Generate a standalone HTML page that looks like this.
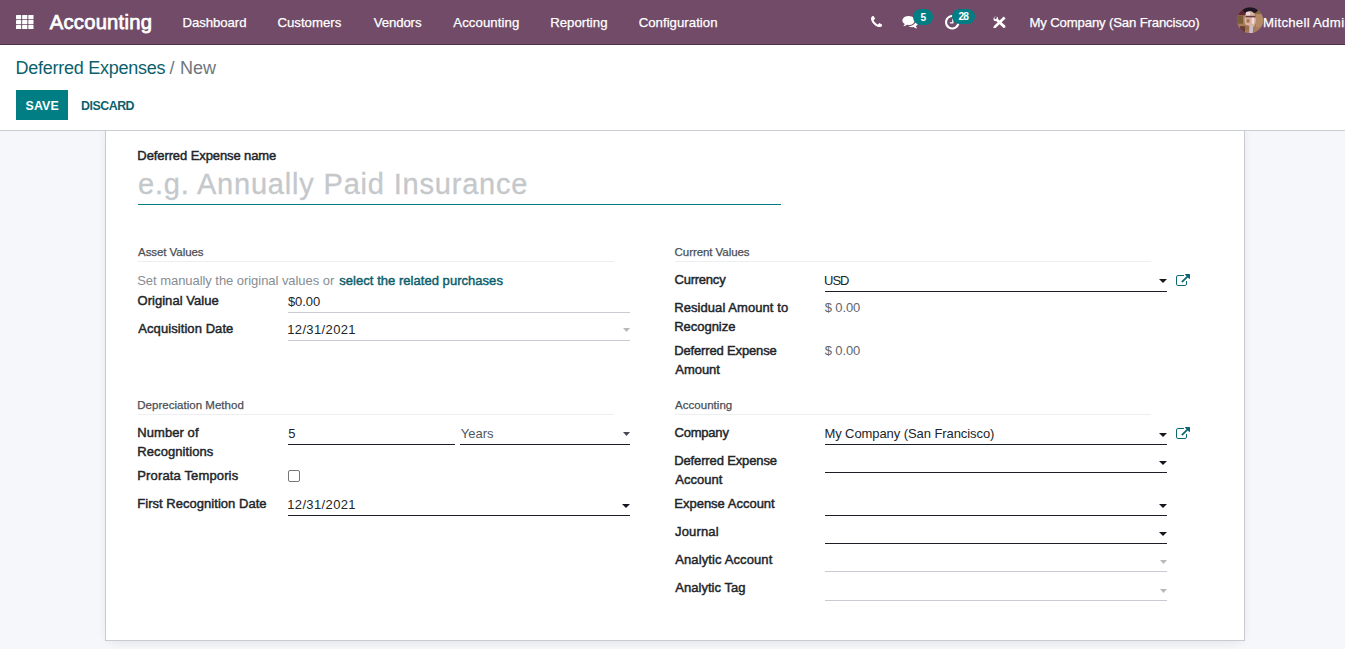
<!DOCTYPE html>
<html lang="en">
<head>
<meta charset="utf-8">
<title>Odoo - Deferred Expenses / New</title>
<style>
*{box-sizing:border-box;margin:0;padding:0}
html,body{width:1345px;height:649px;overflow:hidden}
body{font-family:"Liberation Sans",sans-serif;font-size:13px;color:#212529;background:#f6f7fa;position:relative}
.t{position:absolute;white-space:nowrap;line-height:1}
.a{position:absolute}
#nav{left:0;top:0;width:1345px;height:45px;background:#714b67;border-bottom:1px solid #4f3448}
#cp{left:0;top:45px;width:1345px;height:86px;background:#fff;border-bottom:1px solid #c9ccd2}
#save{left:16px;top:90px;width:52px;height:30px;background:#017e84}
#sheet{left:105px;top:120px;width:1140px;height:521px;background:#fff;border:1px solid #c9cad3;box-shadow:0 3px 12px -5px rgba(40,40,70,.16)}
.badge{background:#017e84;border-radius:8px}
.hr{position:absolute;height:1px;background:#eceef0}
.ul{position:absolute;height:1px;background:#1b1d29}
.ul.l{background:#c9cad3}
.car{position:absolute;width:0;height:0;border-left:4px solid transparent;border-right:4px solid transparent;border-top:4px solid #16161e}
.car.l{border:0;width:7px;height:4px;margin-left:1px;background:#b5b8bd;clip-path:polygon(0 0,100% 0,50% 100%)}
.car.g{border:0;width:7px;height:4px;margin-left:1px;background:#4b4856;clip-path:polygon(0 0,100% 0,50% 100%)}
#chk{left:288px;top:470px;width:12px;height:12px;border:1px solid #767676;border-radius:2px;background:#fff}
</style>
</head>
<body>
<div class="a" id="nav"></div>
<svg class="a" style="left:15.6px;top:14.8px" width="18" height="14.5" viewBox="0 0 18 14.5"><g fill="#fff"><rect x="0" y="0" width="5.2" height="4.2" rx="0.4"/><rect x="6.15" y="0" width="5.2" height="4.2" rx="0.4"/><rect x="12.3" y="0" width="5.2" height="4.2" rx="0.4"/><rect x="0" y="5.0" width="5.2" height="4.2" rx="0.4"/><rect x="6.15" y="5.0" width="5.2" height="4.2" rx="0.4"/><rect x="12.3" y="5.0" width="5.2" height="4.2" rx="0.4"/><rect x="0" y="10.0" width="5.2" height="4.2" rx="0.4"/><rect x="6.15" y="10.0" width="5.2" height="4.2" rx="0.4"/><rect x="12.3" y="10.0" width="5.2" height="4.2" rx="0.4"/></g></svg>
<!-- phone -->
<svg class="a" style="left:871px;top:16.3px" width="11.2" height="11.2" viewBox="0 0 1408 1408"><path fill="#fff" d="M1408 1112q0 27-10 70.500t-21 68.500q-21 50-122 106-94 51-186 51-27 0-53-3.500t-57.500-12.500-47-14.500-55.500-20.500-49-18q-98-35-175-83-127-79-264-216t-216-264q-48-77-83-175-3-9-18-49t-20.500-55.500-14.500-47-12.500-57.500-3.500-53q0-92 51-186 56-101 106-122 25-11 68.500-21t70.500-10q14 0 21 3 18 6 53 76 11 19 30 54t35 63.500 31 53.500q3 4 17.500 25t21.500 35.500 7 28.500q0 20-28.500 50t-62 55-62 53-28.500 46q0 9 5 22.500t8.500 20.500 14 24 11.500 19q76 137 174 235t235 174q2 1 19 11.500t24 14 20.500 8.500 22.500 5q18 0 46-28.500t53-62 55-62 50-28.500q14 0 28.500 7t35.500 21.500 25 17.500q25 15 53.500 31t63.500 35 54 30q70 35 76 53 3 7 3 21z"/></svg>
<!-- comments -->
<svg class="a" style="left:902px;top:16px" width="16.5" height="13.5" viewBox="0 0 1792 1536"><path fill="#fff" d="M1408 512q0 139-94 257t-256.500 186.500-353.500 68.500q-86 0-176-16-124 88-278 128-36 9-86 16h-3q-11 0-20.500-8t-11.500-21q-1-3-1-6.500t.500-6.500 2-6l2.500-5t3.500-5.500 4-5 4.500-5 4-4.500q5-6 23-25t26-29.500 22.500-29 25-38.500 20.500-44q-124-72-195-177t-71-224q0-139 94-257t256.500-186.500 353.500-68.500 353.500 68.500 256.500 186.500 94 257zM1792 768q0 120-71 224.500t-195 176.500q10 24 20.500 44t25 38.500 22.500 29 26 29.500 23 25q1 1 4 4.500t4.500 5 4 5 3.500 5.500l2.500 5t2 6 .5 6.500-1 6.500q-3 14-13 22t-22 7q-50-7-86-16-154-40-278-128-90 16-176 16-271 0-472-132 58 4 88 4 161 0 309-45t264-129q125-92 192-212t67-254q0-77-23-152 129 71 204 178t75 230z"/></svg>
<div class="a badge" style="left:913px;top:9px;width:20px;height:16px"></div>
<!-- clock -->
<svg class="a" style="left:945px;top:15px" width="14.5" height="14.5" viewBox="0 0 1536 1536"><path fill="#fff" d="M896 416v448q0 14-9 23t-23 9h-320q-14 0-23-9t-9-23v-64q0-14 9-23t23-9h224v-352q0-14 9-23t23-9h64q14 0 23 9t9 23zM1312 768q0-148-73-273t-198-198-273-73-273 73-198 198-73 273 73 273 198 198 273 73 273-73 198-198 73-273zM1536 768q0 209-103 385.500t-279.500 279.500-385.500 103-385.500-103-279.500-279.500-103-385.500 103-385.500 279.500-279.500 385.500-103 385.500 103 279.500 279.500 103 385.500z"/></svg>
<div class="a badge" style="left:952px;top:9px;width:23px;height:15px"></div>
<!-- tools -->
<svg class="a" style="left:992.5px;top:15.5px" width="13" height="13" viewBox="0 0 13 13"><path d="M0.3 12.1 L0.9 10 L10.7 0.5 L12.6 2.4 L2.6 11.9 Z" fill="#fff"/><path d="M3.2 4.9 L5 3 L12.4 9.8 L12.3 11.6 L10.5 12 Z" fill="#fff"/><circle cx="2.8" cy="2.9" r="2.35" fill="#fff"/><circle cx="2.5" cy="2.1" r="1.05" fill="#714b67"/><path d="M1.3 1.6 L3.2 0 L4 1.2 L2.6 2.4 Z" fill="#714b67"/></svg>
<!-- avatar -->
<svg class="a" style="left:1236.8px;top:6.8px" width="26" height="26.4" viewBox="0 0 26 26"><defs><clipPath id="av"><circle cx="13" cy="13" r="13"/></clipPath><filter id="bl" x="-10%" y="-10%" width="120%" height="120%"><feGaussianBlur stdDeviation="0.7"/></filter></defs><g clip-path="url(#av)"><rect width="26" height="26" fill="#a67c5a"/><g filter="url(#bl)"><rect x="-1" y="-1" width="14" height="9" fill="#5c2730"/><rect x="18" y="-1" width="9" height="8" fill="#8a6a45"/><rect x="-1" y="8.5" width="7" height="8" fill="#7a5c38"/><rect x="19" y="7" width="8" height="13" fill="#b58a66"/><ellipse cx="13.5" cy="2.8" rx="7.5" ry="3.4" fill="#1f1424"/><ellipse cx="13.2" cy="12.5" rx="5.8" ry="8.6" fill="#d9b3a3"/><ellipse cx="11" cy="6.5" rx="2.4" ry="2.2" fill="#ead6dc"/><rect x="8.5" y="8.6" width="10" height="1.6" fill="#6b3b3a"/><rect x="9.5" y="12" width="3" height="3.4" fill="#b0704a"/><rect x="14.8" y="10.5" width="2.2" height="6" fill="#ecdde2"/><ellipse cx="10" cy="20.5" rx="3" ry="2.5" fill="#9a7048"/><rect x="12.3" y="19" width="3.6" height="8" fill="#c9bfd0"/><rect x="3" y="19" width="5" height="6" fill="#6a3a35"/></g></g></svg>

<div class="a" id="sheet"></div>
<div class="a" id="cp"></div>
<div class="a" id="save"></div>

<!-- title underline -->
<div class="ul" style="left:138px;top:204px;width:643px;background:#017e84"></div>
<!-- separators -->
<div class="hr" style="left:138px;top:261px;width:476px"></div>
<div class="hr" style="left:675px;top:261px;width:476px"></div>
<div class="hr" style="left:138px;top:414px;width:476px"></div>
<div class="hr" style="left:675px;top:414px;width:476px"></div>
<!-- left underlines -->
<div class="ul l" style="left:288px;top:312px;width:342px"></div>
<div class="ul l" style="left:288px;top:340px;width:342px"></div>
<div class="car l" style="left:622px;top:328px"></div>
<div class="ul" style="left:288px;top:444px;width:167px"></div>
<div class="ul" style="left:460px;top:444px;width:170px"></div>
<div class="car g" style="left:622px;top:432px"></div>
<div class="a" id="chk"></div>
<div class="ul" style="left:288px;top:515px;width:342px"></div>
<div class="car" style="left:622px;top:504px"></div>
<!-- right underlines -->
<div class="ul" style="left:825px;top:291px;width:342px"></div>
<div class="car" style="left:1159px;top:279px"></div>
<div class="ul" style="left:825px;top:444px;width:342px"></div>
<div class="car" style="left:1159px;top:433px"></div>
<div class="ul" style="left:825px;top:472px;width:342px"></div>
<div class="car" style="left:1159px;top:461px"></div>
<div class="ul" style="left:825px;top:515px;width:342px"></div>
<div class="car" style="left:1159px;top:504px"></div>
<div class="ul" style="left:825px;top:543px;width:342px"></div>
<div class="car" style="left:1159px;top:532px"></div>
<div class="ul l" style="left:825px;top:571px;width:342px"></div>
<div class="car l" style="left:1159px;top:560px"></div>
<div class="ul l" style="left:825px;top:600px;width:342px"></div>
<div class="car l" style="left:1159px;top:589px"></div>
<!-- external link icons -->
<svg class="a" style="left:1176px;top:273.5px" width="14" height="12" viewBox="0 0 1792 1536"><path fill="#0c6772" d="M1408 800v320q0 119-84.500 203.500t-203.500 84.500h-832q-119 0-203.500-84.500t-84.500-203.500v-832q0-119 84.500-203.500t203.500-84.500h704q14 0 23 9t9 23v64q0 14-9 23t-23 9h-704q-66 0-113 47t-47 113v832q0 66 47 113t113 47h832q66 0 113-47t47-113v-320q0-14 9-23t23-9h64q14 0 23 9t9 23zM1792-64v512q0 26-19 45t-45 19-45-19l-176-176-652 652q-10 10-23 10t-23-10l-114-114q-10-10-10-23t10-23l652-652-176-176q-19-19-19-45t19-45 45-19h512q26 0 45 19t19 45z" transform="translate(0,128)"/></svg>
<svg class="a" style="left:1176px;top:427px" width="14" height="12" viewBox="0 0 1792 1536"><path fill="#0c6772" d="M1408 800v320q0 119-84.500 203.500t-203.500 84.500h-832q-119 0-203.500-84.500t-84.500-203.500v-832q0-119 84.500-203.500t203.500-84.500h704q14 0 23 9t9 23v64q0 14-9 23t-23 9h-704q-66 0-113 47t-47 113v832q0 66 47 113t113 47h832q66 0 113-47t47-113v-320q0-14 9-23t23-9h64q14 0 23 9t9 23zM1792-64v512q0 26-19 45t-45 19-45-19l-176-176-652 652q-10 10-23 10t-23-10l-114-114q-10-10-10-23t10-23l652-652-176-176q-19-19-19-45t19-45 45-19h512q26 0 45 19t19 45z" transform="translate(0,128)"/></svg>

<div class="t" style="left:49.80px;top:12px;font-size:20.2px;-webkit-text-stroke:0.75px currentColor;color:#fff;letter-spacing:0.244px;">Accounting</div>
<div class="t" style="left:182.50px;top:16px;font-size:13.2px;-webkit-text-stroke:0.25px currentColor;color:#fff;letter-spacing:-0.069px;">Dashboard</div>
<div class="t" style="left:277.50px;top:16px;font-size:13.2px;-webkit-text-stroke:0.25px currentColor;color:#fff;letter-spacing:0.000px;">Customers</div>
<div class="t" style="left:373.80px;top:16px;font-size:13.2px;-webkit-text-stroke:0.25px currentColor;color:#fff;letter-spacing:-0.117px;">Vendors</div>
<div class="t" style="left:453.30px;top:16px;font-size:13.2px;-webkit-text-stroke:0.25px currentColor;color:#fff;letter-spacing:0.078px;">Accounting</div>
<div class="t" style="left:550.20px;top:16px;font-size:13.2px;-webkit-text-stroke:0.25px currentColor;color:#fff;letter-spacing:0.012px;">Reporting</div>
<div class="t" style="left:638.70px;top:16px;font-size:13.2px;-webkit-text-stroke:0.25px currentColor;color:#fff;letter-spacing:0.029px;">Configuration</div>
<div class="t" style="left:1029.50px;top:16px;font-size:13.2px;-webkit-text-stroke:0.25px currentColor;color:#fff;letter-spacing:-0.170px;">My Company (San Francisco)</div>
<div class="t" style="left:1263.00px;top:16px;font-size:13.2px;-webkit-text-stroke:0.25px currentColor;color:#fff;letter-spacing:0.271px;">Mitchell</div>
<div class="t" style="left:1312.90px;top:16px;font-size:13.2px;-webkit-text-stroke:0.25px currentColor;color:#fff;letter-spacing:0.387px;">Admin</div>
<div class="t" style="left:920.55px;top:13px;font-size:10.2px;font-weight:bold;color:#fff;letter-spacing:0.000px;">5</div>
<div class="t" style="left:958.45px;top:12px;font-size:10.2px;font-weight:bold;color:#fff;letter-spacing:-0.850px;">28</div>
<div class="t" style="left:15.40px;top:59px;font-size:18px;color:#0c5f6c;letter-spacing:-0.244px;">Deferred Expenses</div>
<div class="t" style="left:169.60px;top:59px;font-size:18px;color:#6f767d;letter-spacing:0.000px;">/</div>
<div class="t" style="left:180.00px;top:59px;font-size:18px;color:#6f767d;letter-spacing:-0.050px;">New</div>
<div class="t" style="left:25.60px;top:100px;font-size:12.4px;font-weight:bold;color:#fff;letter-spacing:0.083px;">SAVE</div>
<div class="t" style="left:81.05px;top:100px;font-size:12.4px;font-weight:bold;color:#0c5f6c;letter-spacing:-0.492px;">DISCARD</div>
<div class="t" style="left:137.35px;top:149px;font-size:13px;-webkit-text-stroke:0.45px currentColor;color:#212529;letter-spacing:-0.098px;">Deferred Expense name</div>
<div class="t" style="left:138.00px;top:170px;font-size:29px;-webkit-text-stroke:0.3px currentColor;color:#c5c8cb;letter-spacing:0.811px;">e.g. Annually Paid Insurance</div>
<div class="t" style="left:138.10px;top:247px;font-size:11.5px;-webkit-text-stroke:0.25px currentColor;color:#4a4f55;letter-spacing:-0.073px;">Asset Values</div>
<div class="t" style="left:674.60px;top:247px;font-size:11.5px;-webkit-text-stroke:0.25px currentColor;color:#4a4f55;letter-spacing:-0.069px;">Current Values</div>
<div class="t" style="left:137.25px;top:400px;font-size:11.5px;-webkit-text-stroke:0.25px currentColor;color:#4a4f55;letter-spacing:0.025px;">Depreciation Method</div>
<div class="t" style="left:675.00px;top:400px;font-size:11.5px;-webkit-text-stroke:0.25px currentColor;color:#4a4f55;letter-spacing:0.039px;">Accounting</div>
<div class="t" style="left:137.25px;top:274px;font-size:13px;color:#878d93;letter-spacing:-0.051px;">Set manually the original values or</div>
<div class="t" style="left:339.30px;top:274px;font-size:13px;-webkit-text-stroke:0.45px currentColor;color:#0c5f6c;letter-spacing:0.037px;">select the related purchases</div>
<div class="t" style="left:137.50px;top:294px;font-size:13px;-webkit-text-stroke:0.45px currentColor;color:#212529;letter-spacing:0.035px;">Original Value</div>
<div class="t" style="left:287.95px;top:295px;font-size:13px;color:#212529;letter-spacing:-0.087px;">$0.00</div>
<div class="t" style="left:138.25px;top:322px;font-size:13px;-webkit-text-stroke:0.45px currentColor;color:#212529;letter-spacing:0.077px;">Acquisition Date</div>
<div class="t" style="left:287.20px;top:323px;font-size:13px;color:#212529;letter-spacing:0.367px;">12/31/2021</div>
<div class="t" style="left:137.25px;top:426px;font-size:13px;-webkit-text-stroke:0.45px currentColor;color:#212529;letter-spacing:0.069px;">Number of</div>
<div class="t" style="left:137.25px;top:445px;font-size:13px;-webkit-text-stroke:0.45px currentColor;color:#212529;letter-spacing:0.086px;">Recognitions</div>
<div class="t" style="left:288.20px;top:427px;font-size:13px;color:#212529;letter-spacing:0.000px;">5</div>
<div class="t" style="left:460.70px;top:427px;font-size:13px;color:#4f5660;letter-spacing:0.038px;">Years</div>
<div class="t" style="left:137.25px;top:469px;font-size:13px;-webkit-text-stroke:0.45px currentColor;color:#212529;letter-spacing:0.143px;">Prorata Temporis</div>
<div class="t" style="left:137.25px;top:497px;font-size:13px;-webkit-text-stroke:0.45px currentColor;color:#212529;letter-spacing:0.033px;">First Recognition Date</div>
<div class="t" style="left:287.20px;top:498px;font-size:13px;color:#212529;letter-spacing:0.367px;">12/31/2021</div>
<div class="t" style="left:674.50px;top:273px;font-size:13px;-webkit-text-stroke:0.45px currentColor;color:#212529;letter-spacing:-0.229px;">Currency</div>
<div class="t" style="left:824.00px;top:274px;font-size:13px;color:#212529;letter-spacing:-0.975px;">USD</div>
<div class="t" style="left:674.25px;top:301px;font-size:13px;-webkit-text-stroke:0.45px currentColor;color:#212529;letter-spacing:0.068px;">Residual Amount to</div>
<div class="t" style="left:674.25px;top:320px;font-size:13px;-webkit-text-stroke:0.45px currentColor;color:#212529;letter-spacing:-0.031px;">Recognize</div>
<div class="t" style="left:824.75px;top:301px;font-size:13px;color:#5f666d;letter-spacing:-0.120px;">$ 0.00</div>
<div class="t" style="left:674.25px;top:344px;font-size:13px;-webkit-text-stroke:0.45px currentColor;color:#212529;letter-spacing:-0.150px;">Deferred Expense</div>
<div class="t" style="left:675.25px;top:363px;font-size:13px;-webkit-text-stroke:0.45px currentColor;color:#212529;letter-spacing:-0.030px;">Amount</div>
<div class="t" style="left:824.75px;top:344px;font-size:13px;color:#5f666d;letter-spacing:-0.120px;">$ 0.00</div>
<div class="t" style="left:674.50px;top:426px;font-size:13px;-webkit-text-stroke:0.45px currentColor;color:#212529;letter-spacing:-0.208px;">Company</div>
<div class="t" style="left:824.40px;top:427px;font-size:13px;color:#212529;letter-spacing:-0.078px;">My Company (San Francisco)</div>
<div class="t" style="left:674.25px;top:454px;font-size:13px;-webkit-text-stroke:0.45px currentColor;color:#212529;letter-spacing:-0.137px;">Deferred Expense</div>
<div class="t" style="left:675.25px;top:473px;font-size:13px;-webkit-text-stroke:0.45px currentColor;color:#212529;letter-spacing:0.033px;">Account</div>
<div class="t" style="left:674.25px;top:497px;font-size:13px;-webkit-text-stroke:0.45px currentColor;color:#212529;letter-spacing:0.000px;">Expense Account</div>
<div class="t" style="left:675.00px;top:525px;font-size:13px;-webkit-text-stroke:0.45px currentColor;color:#212529;letter-spacing:0.167px;">Journal</div>
<div class="t" style="left:675.25px;top:553px;font-size:13px;-webkit-text-stroke:0.45px currentColor;color:#212529;letter-spacing:0.110px;">Analytic Account</div>
<div class="t" style="left:675.25px;top:581px;font-size:13px;-webkit-text-stroke:0.45px currentColor;color:#212529;letter-spacing:0.036px;">Analytic Tag</div>
</body>
</html>
